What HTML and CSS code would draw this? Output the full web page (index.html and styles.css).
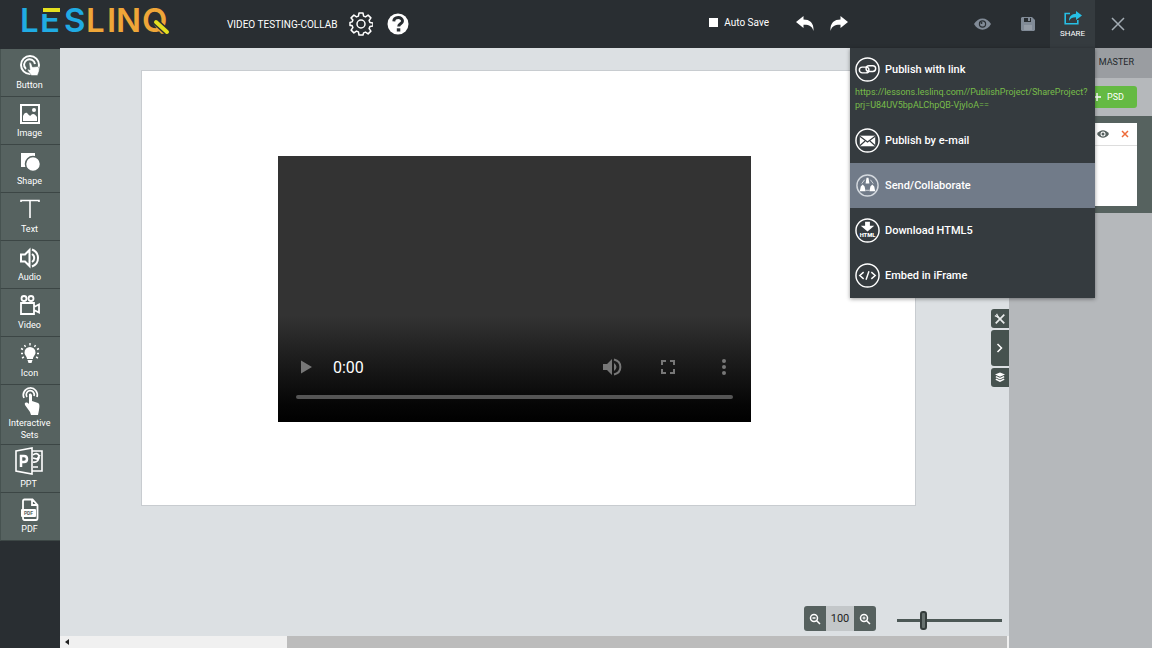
FILE: index.html
```html
<!DOCTYPE html>
<html lang="en">
<head>
<meta charset="utf-8">
<meta name="viewport" content="width=device-width, initial-scale=1">
<title>LESLINQ - VIDEO TESTING-COLLAB</title>
<link rel="stylesheet" href="styles.css">
</head>
<body>
<div class="app">
  <header class="topbar">
    <svg class="logo" width="150" height="44" viewBox="0 0 150 44" role="img" aria-label="LESLINQ">
      <text class="logo-text logo-blue" x="-2 18 42" y="32">LES</text>
      <text class="logo-text logo-orange" x="64 85 94 120" y="32">LINQ</text>
      <rect x="20" y="7" width="20" height="7" fill="#292e32"/>
      <rect x="21" y="8" width="17" height="4" fill="#e5e01f"/>
      <path d="M133 21L145 32" stroke="#292e32" stroke-width="7"/>
      <path d="M134 22L145 32" stroke="#e5e01f" stroke-width="4" stroke-linecap="round"/>
    </svg>
    <h1 class="title">VIDEO TESTING-COLLAB</h1>
    <button class="icon-btn settings" aria-label="Settings">
      <svg width="24" height="24" viewBox="0 0 24 24" fill="none" stroke="#fff" stroke-width="1.5" stroke-linejoin="round"><path d="M10 1h4l.6 3.100 1.900.8 2.600-1.800 2.800 2.800-1.800 2.600.8 1.900 3.100.6v3l-3.100.6-.8 1.900 1.800 2.600-2.800 2.800-2.600-1.800-1.900.8L14 23h-4l-.6-3.100-1.900-.8-2.600 1.800-2.800-2.800 1.800-2.600-.8-1.900L1 13.500v-3l2.100-.6.800-1.900L2.100 5.900l2.800-2.800 2.600 1.800 1.900-.8z"/><circle cx="12" cy="12" r="4"/></svg>
    </button>
    <button class="icon-btn help" aria-label="Help">
      <svg width="22" height="22" viewBox="0 0 22 22"><circle cx="11" cy="11" r="10.500" fill="#fff"/><path d="M6.800 8.400c.2-5 8.700-5 8.700-.4 0 3-3.800 2.700-3.800 5.600" fill="none" stroke="#292e32" stroke-width="3"/><rect x="9.800" y="15.300" width="3.500" height="3.200" fill="#292e32"/></svg>
    </button>
    <label class="autosave"><input type="checkbox" class="autosave-box">Auto Save</label>
    <button class="icon-btn" aria-label="Undo">
      <svg width="18" height="16" viewBox="0 0 18 16" fill="#fff"><path d="M0 6L7.500 0v3.500c6 0 10.500 3 10 11.500-1.300-5-4.500-6.500-10-6.300V12z"/></svg>
    </button>
    <button class="icon-btn redo" aria-label="Redo">
      <svg width="18" height="16" viewBox="0 0 18 16" fill="#fff"><path d="M18 6L10.500 0v3.500C4.500 3.500 0 6.500.5 15c1.300-5 4.500-6.500 10-6.300V12z"/></svg>
    </button>
    <nav class="actions" aria-label="Project">
      <button class="action" aria-label="Preview">
        <svg width="17" height="12" viewBox="0 0 17 12"><path d="M0 6C4-1.500 13-1.500 17 6 13 13.500 4 13.500 0 6z" fill="#818b97"/><circle cx="8.500" cy="6" r="3.700" fill="#292e32"/><circle cx="8.500" cy="6" r="2.500" fill="#818b97"/><circle cx="7.500" cy="5" r="1" fill="#292e32"/></svg>
      </button>
      <button class="action" aria-label="Save">
        <svg width="14" height="14" viewBox="0 0 14 14"><path d="M1 0h10l3 3v10l-1 1H1l-1-1V1z" fill="#818b97"/><path d="M3 1h7v4H3z" fill="#292e32"/><path d="M7 1h2v3H7z" fill="#818b97"/><path d="M3 8h8v5H3z" fill="#959da7"/></svg>
      </button>
      <button class="action action-share" aria-expanded="true">
        <svg width="18" height="14" viewBox="0 0 18 14"><path d="M6 2.500H1.200v10.300h12.600V9" fill="none" stroke="#27bfe5" stroke-width="1.600"/><path d="M12 0l6 4.500L12 9V6.300C8.500 6.300 6.500 7.300 5 10c0-4.500 2.500-7 7-7.200z" fill="#27bfe5"/></svg>
        <span>SHARE</span>
      </button>
      <button class="action" aria-label="Close">
        <svg width="14" height="14" viewBox="0 0 14 14" stroke="#a3acb4" stroke-width="1.500"><path d="M1 1l12 12M13 1L1 13"/></svg>
      </button>
    </nav>
    <div class="share-menu">
      <button class="share-item share-first">
        <svg class="round-icon" viewBox="0 0 26 26"><circle cx="13" cy="13" r="12"/><rect x="4.500" y="10.500" width="10" height="6" rx="3"/><rect x="11.500" y="9" width="10" height="6" rx="3"/></svg>Publish with link
      </button>
      <a class="share-url" href="https://lessons.leslinq.com//PublishProject/ShareProject?prj=U84UV5bpALChpQB-VjyIoA==">https://lessons.leslinq.com//PublishProject/ShareProject?<wbr>prj=U84UV5bpALChpQB-VjyIoA==</a>
      <button class="share-item">
        <svg class="round-icon" viewBox="0 0 26 26"><circle cx="13" cy="13" r="12"/><rect x="5" y="8" width="16" height="11" fill="#fff" stroke="none"/><path d="M5 8.500l8 6 8-6M5 18.500l5.500-5M21 18.500l-5.500-5" stroke="#353b3f" stroke-width="1.200"/></svg>Publish by e-mail
      </button>
      <button class="share-item share-active">
        <svg class="round-icon round-dim" viewBox="0 0 26 26"><circle cx="13" cy="13" r="11"/><path d="M12 5h2l1 6h-4zM6 14l2-2 2 2 1 5H5zM16 14l2-2 2 2 1 5h-6z" fill="#fff" stroke="none"/><path d="M10 7l-3 4M16 7l3 4M11 18h4" stroke-width="1"/></svg>Send/Collaborate
      </button>
      <button class="share-item">
        <svg class="round-icon" viewBox="0 0 26 26"><circle cx="13" cy="13" r="12"/><path d="M10.500 4h5v4H20l-7 6-7-6h4.500z" fill="#fff" stroke="none"/><text class="tiny-html" x="13" y="19.500">HTML</text></svg>Download HTML5
      </button>
      <button class="share-item">
        <svg class="round-icon" viewBox="0 0 26 26"><circle cx="13" cy="13" r="12"/><path d="M9 9.500L5 13l4 3.500M17 9.500l4 3.500-4 3.500M14.500 8.500l-3 9"/></svg>Embed in iFrame
      </button>
    </div>
  </header>

  <aside class="tools">
    <button class="tool">
      <svg width="24" height="24" viewBox="0 0 24 24"><circle cx="12" cy="11" r="9" fill="none" stroke="#fff" stroke-width="2"/><path d="M8 15a5.500 5.500 0 1 1 9-5" fill="none" stroke="#fff" stroke-width="2"/><path d="M11 9c1-1 2 0 2.500 1l1 3 5-.5c2 .5 2 3 1.500 5l-1.500 4h-6L10 17c-1-2 .5-2.500 2-1z" fill="#fff" stroke="#566260" stroke-width=".5"/></svg>
      <span>Button</span></button>
    <button class="tool">
      <svg width="24" height="24" viewBox="0 0 24 24"><rect x="3" y="3" width="18" height="18" fill="none" stroke="#fff" stroke-width="2"/><path d="M5 19v-5c1-3 3-4 4-3 2 2 3 4 4 2 2-2 4-1 6 2v4z" fill="#fff"/><circle cx="16" cy="8" r="2" fill="#fff"/></svg>
      <span>Image</span></button>
    <button class="tool">
      <svg width="24" height="24" viewBox="0 0 24 24"><path d="M3 3h14v14H3z" fill="#fff"/><circle cx="15" cy="14" r="7.500" fill="#fff" stroke="#566260" stroke-width="1.500"/></svg>
      <span>Shape</span></button>
    <button class="tool">
      <svg width="24" height="24" viewBox="0 0 24 24" fill="none" stroke="#fff" stroke-width="1.600"><path d="M3 4V2.500h18V4M12 2.500V20"/></svg>
      <span>Text</span></button>
    <button class="tool">
      <svg width="24" height="24" viewBox="0 0 24 24" fill="none" stroke="#fff" stroke-width="2"><path d="M3 8.500h4L11.500 4v16L7 15.500H3zM14 8c3 2 3 6 0 8M14 3.500c8 3 8 14 0 17"/></svg>
      <span>Audio</span></button>
    <button class="tool">
      <svg width="24" height="24" viewBox="0 0 24 24" fill="none" stroke="#fff" stroke-width="1.800"><circle cx="6" cy="4.500" r="2.500"/><circle cx="13" cy="4.500" r="2.500"/><path d="M3 9h13v11H3zM16 13l5-2.500v8L16 16"/></svg>
      <span>Video</span></button>
    <button class="tool">
      <svg width="24" height="24" viewBox="0 0 24 24"><path d="M9 17c0-3-2.500-3.500-2.500-6.500a5.500 5.500 0 0 1 11 0c0 3-2.500 3.500-2.500 6.500zM9.500 18h5l-1 3h-3z" fill="#fff"/><path d="M12 1v2.500M6.500 3l1 2M17.500 3l-1 2M3 6.500l2 1M21 6.500l-2 1M3 11.500h2M21 11.500h-2M4 16l2-1M20 16l-2-1" stroke="#fff" stroke-width="1.400"/></svg>
      <span>Icon</span></button>
    <button class="tool">
      <svg width="24" height="30" viewBox="0 0 24 30"><path d="M6 12a7 7 0 1 1 13-1M9 11a4 4 0 1 1 7-1" fill="none" stroke="#fff" stroke-width="1.700"/><path d="M11 8c1-1 2.500-.5 3 1v6l6 2c2 1 1.500 4 1 7l-1 5h-7l-1-3-5-7c-1-3 2-3 4-1z" fill="#fff"/></svg>
      <span>Interactive Sets</span></button>
    <button class="tool">
      <svg width="28" height="28" viewBox="0 0 28 28" fill="none" stroke="#fff" stroke-width="1.600"><path d="M1 4l16-3v26L1 24zM17 4h10v20H17"/><path d="M6 20V9h3c4 0 4 6 0 6H6" stroke-width="2.500"/><path d="M18 8c2-2 5-2 6 1s-2 7-6 6M18 11l4 1 3-4M18 20h5"/></svg>
      <span>PPT</span></button>
    <button class="tool">
      <svg width="22" height="24" viewBox="0 0 22 24"><path d="M4 11V3q0-1.500 1.500-1.500h8l5 5.500v13q0 2-1.500 2H5.500Q4 22 4 20v-2M13 1.500V7h5" fill="none" stroke="#fff" stroke-width="1.800"/><rect x="2" y="11" width="15" height="8" rx="1" fill="#fff"/><text class="tiny-pdf" x="9.500" y="17">PDF</text></svg>
      <span>PDF</span></button>
  </aside>

  <main class="workspace">
    <section class="slide">
      <div class="player">
        <div class="controls">
          <button class="icon-btn" aria-label="Play"><svg width="24" height="24" viewBox="0 0 24 24" fill="#777"><path d="M7 5.500v13L18 12z"/></svg></button>
          <span class="time">0:00</span>
          <button class="icon-btn" aria-label="Mute"><svg width="24" height="24" viewBox="0 0 24 24"><path d="M3 9v6h4l5 5V4L7 9z" fill="#777"/><path d="M14 8q5 4 0 8z" fill="#777"/><path d="M14 4.500c8.500 2 8.500 13 0 15" fill="none" stroke="#777" stroke-width="2"/></svg></button>
          <button class="icon-btn" aria-label="Full screen"><svg width="24" height="24" viewBox="0 0 24 24" fill="none" stroke="#777" stroke-width="2"><path d="M6 10V6h4M14 6h4v4M18 14v4h-4M10 18H6v-4"/></svg></button>
          <button class="icon-btn" aria-label="More options"><svg width="24" height="24" viewBox="0 0 24 24" fill="#777"><circle cx="12" cy="6" r="2"/><circle cx="12" cy="12" r="2"/><circle cx="12" cy="18" r="2"/></svg></button>
        </div>
        <input class="seek" type="range" value="0" aria-label="Seek">
      </div>
    </section>
    <div class="side-tabs">
      <button class="side-tab" aria-label="Settings panel"><svg width="12" height="12" viewBox="0 0 14 14" stroke="#e8ebeb" stroke-width="2"><path d="M4 4l8 8M12 2L2 12"/><path d="M1 3l4 2M3 1l2 4" stroke-width="1.500"/></svg></button>
      <button class="side-tab side-tab-tall" aria-label="Collapse panel"><svg width="8" height="12" viewBox="0 0 8 12" fill="none" stroke="#fff" stroke-width="1.500"><path d="M1.500 2l4 4-4 4"/></svg></button>
      <button class="side-tab" aria-label="Layers"><svg width="10" height="11" viewBox="0 0 12 12"><path d="M6 0l6 2.500L6 5 0 2.500z" fill="#fff"/><path d="M1 5l5 2.300L11 5M1 8l5 2.500L11 8" fill="none" stroke="#fff" stroke-width="1.800"/></svg></button>
    </div>
    <div class="zoombar">
      <div class="zoomer">
        <button class="zoom-btn" aria-label="Zoom out"><svg width="12" height="12" viewBox="0 0 12 12" fill="none" stroke="#fff" stroke-width="1.500"><circle cx="5" cy="5" r="3.500"/><path d="M7.500 7.500L11 11M3.500 5h3"/></svg></button>
        <output class="zoom-value">100</output>
        <button class="zoom-btn" aria-label="Zoom in"><svg width="12" height="12" viewBox="0 0 12 12" fill="none" stroke="#fff" stroke-width="1.500"><circle cx="5" cy="5" r="3.500"/><path d="M7.500 7.500L11 11"/><path d="M3.500 5h3M5 3.500v3" stroke-width="1"/></svg></button>
      </div>
      <input class="zoom-slider" type="range" min="0" max="100" value="23" aria-label="Zoom level">
    </div>
    <div class="scrollbar"><svg class="scroll-arrow" width="4" height="6" viewBox="0 0 4 6"><path d="M4 0v6L0 3z"/></svg><div class="scroll-thumb"></div></div>
  </main>

  <aside class="pages">
    <div class="pages-tab">MASTER</div>
    <div class="pages-actions"><button class="psd"><svg width="8" height="8" viewBox="0 0 8 8" stroke="#fff" stroke-width="1.500"><path d="M4 0v8M0 4h8"/></svg>PSD</button></div>
    <div class="page-row">
      <div class="page-card">
        <div class="page-tools">
          <button class="icon-btn" aria-label="Show page"><svg width="12" height="8" viewBox="0 0 12 8"><path d="M0 4c3-5 9-5 12 0-3 5-9 5-12 0z" fill="#56615f"/><circle cx="6" cy="4" r="2.500" fill="#fff"/><circle cx="6" cy="4" r="1.500" fill="#56615f"/></svg></button>
          <button class="icon-btn" aria-label="Delete page"><svg width="8" height="8" viewBox="0 0 8 8" stroke="#ee6b3a" stroke-width="1.500"><path d="M1 1l6 6M7 1L1 7"/></svg></button>
        </div>
      </div>
    </div>
  </aside>
</div>
</body>
</html>
```

FILE: styles.css
```css
* { box-sizing: border-box; }
body {
  margin: 0;
  font-family: Roboto, "Liberation Sans", sans-serif;
  font-size: 11px;
  color: #fff;
}
button { border: 0; padding: 0; background: none; color: inherit; font: inherit; cursor: pointer; }
svg { display: block; flex: none; }
.app {
  display: grid;
  grid-template-columns: 60px 1fr 143px;
  grid-template-rows: 48px 1fr;
  min-height: 100vh;
  background: #292e32;
}

/* Top bar */
.topbar {
  position: relative;
  z-index: 2;
  grid-column: 1 / -1;
  display: flex;
  align-items: center;
  padding: 0 12px 0 22px;
  background: #292e32;
}
.logo { margin-bottom: 4px; overflow: visible; }
.logo-text { font: 600 33px Inter, sans-serif; }
.logo-blue { fill: #20abe3; }
.logo-orange { fill: #efa638; }
.title { margin: 0 0 0 55px; font-size: 10px; font-weight: 400; white-space: nowrap; }
.settings { margin-left: 11px; }
.help { margin-left: 14px; }
.autosave { display: flex; align-items: center; gap: 6px; margin: 0 27px 4px auto; font-size: 10px; }
.autosave-box { appearance: none; width: 9px; height: 9px; margin: 0; background: #fff; }
.redo { margin: 0 112px 0 16px; }
.actions { display: flex; align-self: stretch; }
.action { display: flex; flex-direction: column; align-items: center; justify-content: center; width: 45px; }
.action-share { gap: 5px; background: #353b3f; font-size: 8px; line-height: 8px; }

/* Share menu */
.share-menu {
  position: absolute;
  top: 100%;
  right: 57px;
  width: 245px;
  display: flex;
  flex-direction: column;
  background: #353b3f;
  box-shadow: 0 1px 4px #0006;
}
.share-item {
  display: flex;
  align-items: center;
  gap: 5px;
  height: 45px;
  padding: 0 5px;
  font-weight: 500;
  text-align: left;
}
.share-first { height: 38px; padding-top: 5px; }
.share-active { background: #717b89; }
.share-url {
  padding: 0 4px 6px 5px;
  font-size: 9px;
  line-height: 13px;
  color: #78bd4a;
  text-decoration: none;
}
.round-icon { width: 25px; height: 25px; fill: none; stroke: #fff; stroke-width: 1.5; }
.round-dim { stroke: #d3d8de; }
.tiny-html { font: 900 6px Roboto, sans-serif; text-anchor: middle; fill: #fff; stroke: none; }

/* Tool column */
.tools { display: flex; flex-direction: column; padding-top: 1px; }
.tool {
  display: flex;
  flex-direction: column;
  align-items: center;
  justify-content: space-between;
  min-height: 48px;
  padding: 5px 4px 5px 2px;
  background: #566260;
  border-bottom: 1px solid #3c4645;
  border-left: 1px solid #465250;
  font-size: 9px;
  line-height: 12px;
}
.tool:nth-child(8) { min-height: 60px; padding: 1px 4px 3px 2px; }
.tool:nth-child(9) { padding: 2px 6px 2px 2px; }
.tiny-pdf { font: 700 5px Roboto, sans-serif; text-anchor: middle; fill: #566260; }

/* Canvas */
.workspace { position: relative; display: flex; flex-direction: column; background: #dce0e3; }
.slide {
  margin: 22px 93px 0 81px;
  padding: 85px 164px 0 136px;
  aspect-ratio: 16 / 9;
  background: #fff;
  border: 1px solid #c8ccd0;
}
.player {
  display: flex;
  flex-direction: column;
  justify-content: flex-end;
  aspect-ratio: 16 / 9;
  padding: 0 18px 23px;
  background: linear-gradient(#333 0 60%, #1d1d1d 76%, #050505 94%, #000);
}
.controls { display: flex; align-items: center; gap: 32px; margin: 0 -2px 16px; }
.icon-btn { display: flex; }
.time { margin: 0 auto 0 -17px; font-size: 16px; }
.controls .icon-btn:last-child { margin-right: -1px; }
.seek { appearance: none; width: 100%; height: 4px; margin: 0; border-radius: 2px; background: #555; }
.seek::-webkit-slider-thumb { appearance: none; width: 0; height: 0; }

.side-tabs { position: absolute; right: 0; top: 261px; display: flex; flex-direction: column; gap: 2px; }
.side-tab {
  display: flex;
  align-items: center;
  justify-content: center;
  width: 18px;
  height: 19px;
  background: #46524f;
  border-radius: 3px 0 0 3px;
}
.side-tab-tall { height: 36px; }

.zoombar { display: flex; align-items: center; justify-content: flex-end; gap: 21px; margin: auto 7px 5px 0; }
.zoomer { display: flex; height: 25px; border-radius: 3px; overflow: hidden; }
.zoom-btn { display: flex; align-items: center; justify-content: center; width: 22px; background: #56615f; }
.zoom-value { display: flex; align-items: center; justify-content: center; width: 28px; background: #c3c7c9; color: #222; }
.zoom-slider { appearance: none; width: 105px; height: 20px; margin: 3px 0 0; background: linear-gradient(#4c5856, #4c5856) center / 100% 3px no-repeat; }
.zoom-slider::-webkit-slider-thumb { appearance: none; width: 7px; height: 19px; border: 2px solid #353d3c; border-radius: 3px; background: #687270; }
.scrollbar { display: flex; align-items: center; height: 12px; padding: 0 2px 0 5px; background: #f0f0f0; }
.scroll-arrow { fill: #222; }
.scroll-thumb { flex: 1; align-self: stretch; margin-left: 218px; background: #bcbcbc; }

/* Page list */
.pages { background: #b5b8bb; color: #23282b; font-size: 9px; }
.pages-tab { padding: 7px 18px 9px 0; background: #9a9da1; line-height: 14px; text-align: right; }
.pages-actions { display: flex; justify-content: flex-end; padding: 8px 15px; }
.psd { display: flex; align-items: center; gap: 6px; height: 22px; padding: 0 13px 0 8px; border-radius: 3px; background: #65ba43; color: #fff; }
.page-row { padding: 7px 15px; background: #56625f; }
.page-card { height: 83px; background: #fff; }
.page-tools { display: flex; align-items: center; justify-content: flex-end; gap: 12px; height: 23px; padding-right: 8px; border-bottom: 1px solid #ddd; }
```
